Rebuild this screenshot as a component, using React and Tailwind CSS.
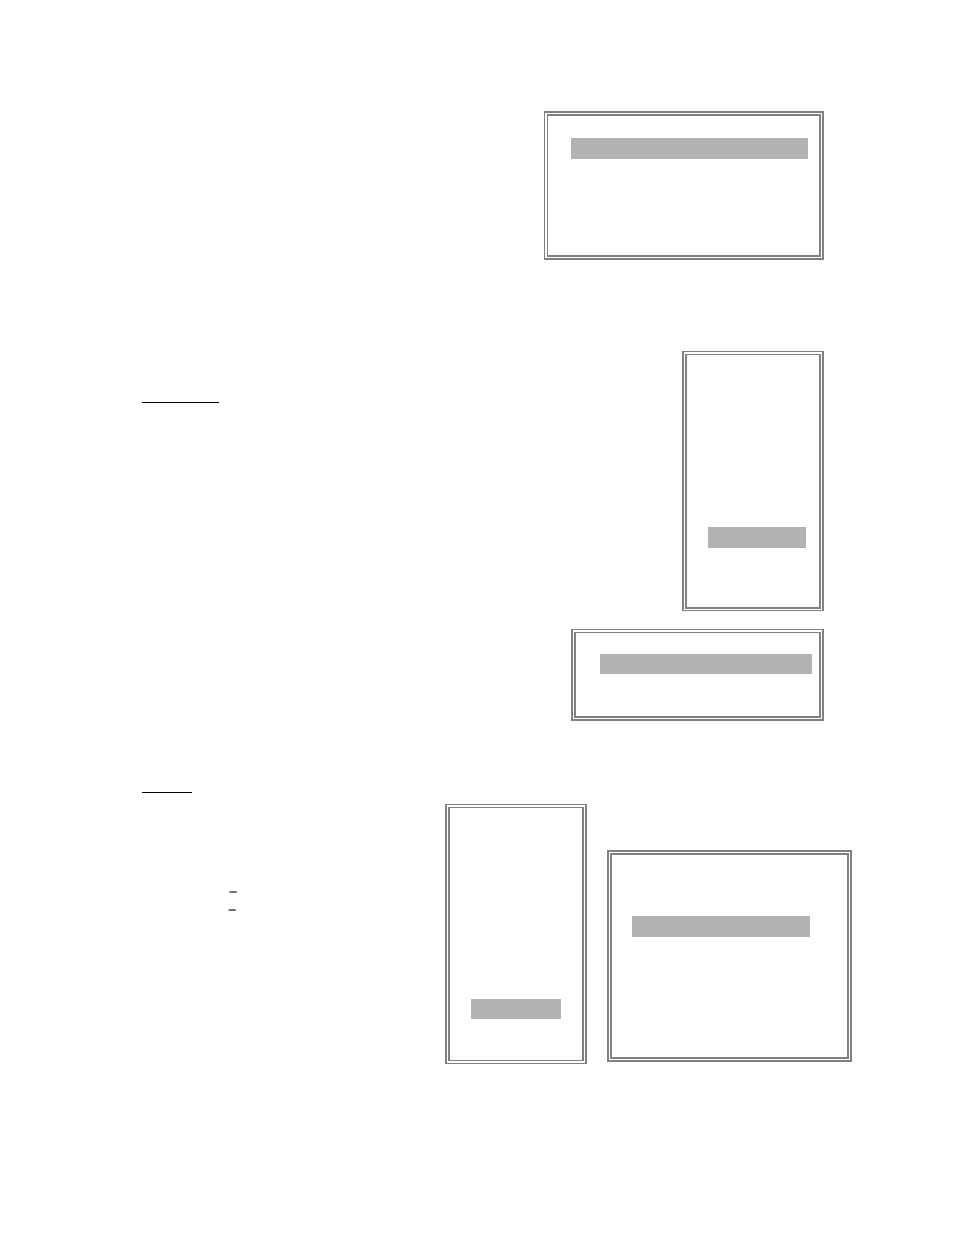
import React from "react";
import clsx from "clsx";

// double ruled frame with one highlighted entry
function MenuFrame({ outer, inner, bar, addClass }) {
    return (
        <section
            className={clsx("shrink-0 border-[#808080]", outer, addClass)}
        >
            <div className={clsx("border-[#808080]", inner)}>
                <div className={clsx("bg-[#b2b2b2]", bar)} />
            </div>
        </section>
    );
}

function Rule({ addClass }) {
    return <div className={clsx("h-px bg-black", addClass)} />;
}

function Dash() {
    return (
        <div className="flex h-[2px] w-2">
            <span className="w-px bg-[#bbbbbb]" />
            <span className="grow bg-[#707070]" />
            <span className="w-px bg-[#a0a0a0]" />
        </div>
    );
}

function App() {
    return (
        <main className="min-h-screen bg-white pt-[111px] pr-[102px] pb-[171px] pl-[142px]">
            <div className="flex flex-col items-end pr-7">
                <MenuFrame
                    outer="border-2 border-l pt-px pr-px pb-px pl-[2px]"
                    inner="border-2 border-l pt-[22px] pr-[11px] pb-24 pl-[23px]"
                    bar="h-[21px] w-[237px]"
                />
                <div className="mt-[91px] flex w-full items-start justify-between">
                    <Rule addClass="mt-[51px] w-[77px]" />
                    <MenuFrame
                        outer="border-x-2 border-y px-px pt-[2px] pb-px"
                        inner="border-2 border-t pt-[172px] pr-[13px] pb-[59px] pl-[21px]"
                        bar="h-[21px] w-[98px]"
                    />
                </div>
                <MenuFrame
                    outer="border-2 border-t px-px pt-[2px] pb-px"
                    inner="border-2 border-t pt-[21px] pr-[7px] pb-[42px] pl-6"
                    bar="h-5 w-[212px]"
                    addClass="mt-[18px]"
                />
            </div>

            <div className="mt-[71px] flex items-start justify-between">
                <div>
                    <Rule addClass="w-[50px]" />
                    <div className="mt-[98px] flex flex-col gap-4 pl-[86px]">
                        <div className="pl-px">
                            <Dash />
                        </div>
                        <Dash />
                    </div>
                </div>
                <div className="flex items-start gap-5">
                    <MenuFrame
                        outer="border-x-2 border-y px-px py-[2px]"
                        inner="border-x-2 border-y px-[21px] pt-[191px] pb-[41px]"
                        bar="h-5 w-[90px]"
                        addClass="mt-3"
                    />
                    <MenuFrame
                        outer="border-2 p-px"
                        inner="border-2 pt-[61px] pr-[37px] pb-[120px] pl-5"
                        bar="h-[21px] w-[178px]"
                        addClass="mt-[58px]"
                    />
                </div>
            </div>
        </main>
    );
}

export default App;
